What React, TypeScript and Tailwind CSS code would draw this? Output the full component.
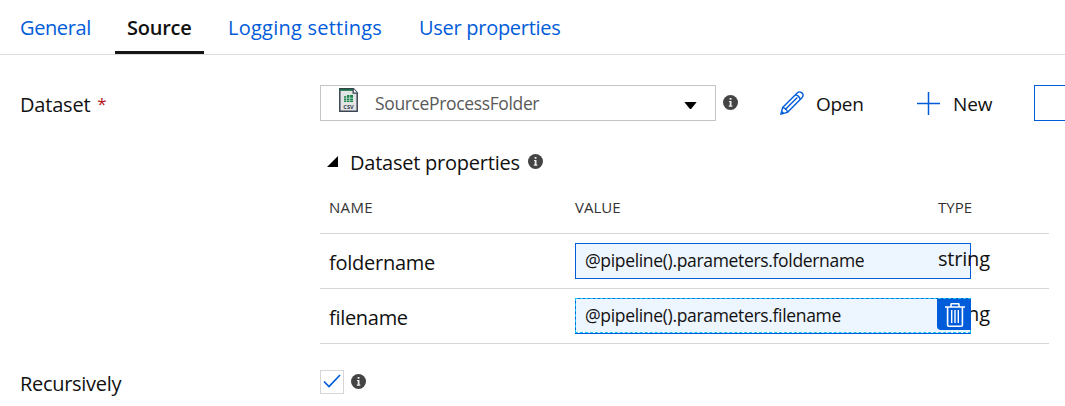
import React from "react";

function Info({ className = "" }: { className?: string }) {
  return (
    <svg className={`mb-px h-[15px] w-[15px] shrink-0 ${className}`} viewBox="0 0 15 15">
      <circle cx="7.5" cy="7.5" r="7.5" fill="#444" />
      <path d="M6.6 3h1.9v1.7H6.6zM6 6h2.5v4.6h.8v1.1H5.8v-1.1h.9V7H6z" fill="#eee" />
    </svg>
  );
}

function CsvIcon() {
  return (
    <svg className="ml-[18px] mt-[2px] h-6 w-[19px] shrink-0 self-start" viewBox="0 0 19 24">
      <path d="M.8.8h13.7l3.7 4v18.4H.8z" fill="#e2e4e6" stroke="#3b4652" strokeWidth="1.5" />
      <path d="M.5.3h14v2.5H.5z" fill="#176b42" />
      <path d="M0 0h15v1H0z" fill="#34404b" />
      <path d="M14.2.5v4.6h4" fill="#fff" stroke="#3b4652" strokeWidth="1.3" />
      <path d="M5 8.2h2.3v1.6H5zM8 7h2.4v2.8H8zM11.1 7H14v2.8h-2.9zM5 10.4h2.3v1.5H5zM8 10.4h2.4v1.5H8zM11.1 10.4H14v1.5h-2.9zM5 12.5h2.3V14H5zM8 12.5h2.4V14H8zM11.1 12.5H14V14h-2.9z" fill="#16864a" />
      <text x="9.5" y="20.8" textAnchor="middle" fontSize="5.6" fontWeight="700" fill="#343c46" fontFamily="Open Sans, sans-serif">CSV</text>
    </svg>
  );
}

function Pencil() {
  return (
    <svg className="h-6 w-6 shrink-0" viewBox="0 0 24 24" fill="none" stroke="#015cda" strokeWidth="1.4" strokeLinejoin="round">
      <path d="M.9 23.2l1.7-6.6L17.2 2q1.9-1.9 4-.6 3.2 2.1 1 5L7.6 21.3z" />
      <path d="M15.4 3.8q3.8.8 4.9 4.7M2.6 16.6q4.1.6 5 4.7M1.6 20.4l2.1 2.1M5 18.8L17.3 6.4" />
    </svg>
  );
}

function Trash() {
  return (
    <svg className="ml-px h-6 w-5" viewBox="0 0 20 24" fill="none" stroke="#fff" strokeWidth="1.6">
      <path d="M0 4h20M6 4V1.4Q6 .8 6.7.8h6.6q.7 0 .7.6V4M2.6 4v18q0 1.2 1.2 1.2h12.4q1.2 0 1.2-1.2V4" />
      <path d="M6.7 7v13M10 7v13M13.3 7v13" strokeWidth="1.4" />
    </svg>
  );
}

const rows = [
  { name: "foldername", value: "@pipeline().parameters.foldername", nameClass: "tracking-[-0.25px]", selected: false },
  { name: "filename", value: "@pipeline().parameters.filename", nameClass: "tracking-[-0.3px]", selected: true },
];

export default function App() {
  return (
    <main className="h-[406px] w-[1065px] overflow-hidden whitespace-nowrap bg-white font-['Open_Sans',sans-serif] text-[20px] leading-7 text-[#111]">
      <nav className="flex h-[55px] border-b border-[#dcdcdc] pl-5 pt-[14px] text-[#015cda]">
        <span className="w-[95px] tracking-[-0.4px]">General</span>
        <span className="h-10 w-[89px] border-b-3 border-[#161616] pl-3 font-semibold tracking-[-0.25px] text-[#111]">Source</span>
        <span className="ml-6 w-[191px] tracking-[0.24px]">Logging settings</span>
        <span className="tracking-[-0.28px]">User properties</span>
      </nav>

      <section className="mt-[30px] flex h-9 items-center">
        <div className="flex w-[320px] shrink-0 pl-5 pt-[4px]">
          <span className="tracking-[-0.2px]">Dataset</span>
          <span className="ml-[7px] text-[17px] leading-[26px] text-[#b5121b]">*</span>
        </div>
        <div className="flex h-9 w-[396px] shrink-0 items-center border border-[#c4c4c4]">
          <CsvIcon />
          <span className="ml-[17px] text-[17.5px] tracking-[-0.36px] text-[#595959]">SourceProcessFolder</span>
          <svg className="ml-auto mr-[18px] mt-[5px] h-[7px] w-[13px]" viewBox="0 0 13 7"><path d="M.3 0h12.4L7.5 6.5q-1 1-2 0z" /></svg>
        </div>
        <Info className="ml-[7px]" />
        <div className="ml-[42px] flex w-[137px] shrink-0 items-center">
          <Pencil />
          <span className="ml-3 pt-[2px] text-[19px] tracking-[-0.3px]">Open</span>
        </div>
        <svg className="h-[23px] w-[23px] shrink-0" viewBox="0 0 23 23"><path d="M0 11.5h23M11.5 0v23" stroke="#015cda" strokeWidth="1.5" /></svg>
        <span className="ml-[13px] w-[81px] shrink-0 pt-[2px] text-[19px] tracking-[-0.1px]">New</span>
        <div className="h-9 w-[120px] shrink-0 border border-[#015cda]" />
      </section>

      <section className="ml-[320px] w-[729px]">
        <div className="flex h-[62px] items-center pt-5">
          <svg className="mb-px ml-[7px] h-[11px] w-[11px]" viewBox="0 0 11 11"><path d="M11 0v11H0z" /></svg>
          <span className="ml-3 w-[170px] pt-[2px] tracking-[-0.23px]">Dataset properties</span>
          <Info className="ml-2" />
        </div>
        <div className="grid h-[51px] grid-cols-[246px_363px_111px] items-center border-b border-[#d6d6d6] pb-[2px] pl-[9px] text-[15px] text-[#333]">
          <span className="tracking-[0.3px]">NAME</span>
          <span>VALUE</span>
          <span>TYPE</span>
        </div>
        {rows.map((row) => (
          <div key={row.name} className="grid h-[55px] grid-cols-[246px_363px_111px] items-center border-b border-[#d6d6d6] pl-[9px]">
            <span className={`pt-[3px] ${row.nameClass}`}>{row.name}</span>
            <div className="relative h-9 w-[396px] border border-[#015cda] bg-[#edf5fe] pl-[9px] text-[17.5px] leading-[32px]">
              <span className="tracking-[-0.33px]">{row.value}</span>
              {row.selected && <div className="absolute -left-px -right-px -top-px bottom-0 border border-dashed border-[#18c4f4]" />}
            </div>
            <span className="relative pb-1 tracking-[-0.2px]">
              string
              {row.selected && (
                <span className="absolute -left-px -top-px flex h-[31px] w-[34px] items-center justify-center rounded-bl bg-[#015cda]"><Trash /></span>
              )}
            </span>
          </div>
        ))}
      </section>

      <section className="mt-[26px] flex h-6 items-center">
        <span className="w-[320px] pl-5 pt-[4px] tracking-[-0.3px]">Recursively</span>
        <div className="flex h-6 w-6 items-center justify-center border border-[#d6d6d6] pb-[2px]">
          <svg className="h-[14px] w-[18px]" viewBox="0 0 18 14"><path d="M1 7.5l5 5L17 1" fill="none" stroke="#015cda" strokeWidth="1.7" /></svg>
        </div>
        <Info className="ml-[7px]" />
      </section>
    </main>
  );
}
